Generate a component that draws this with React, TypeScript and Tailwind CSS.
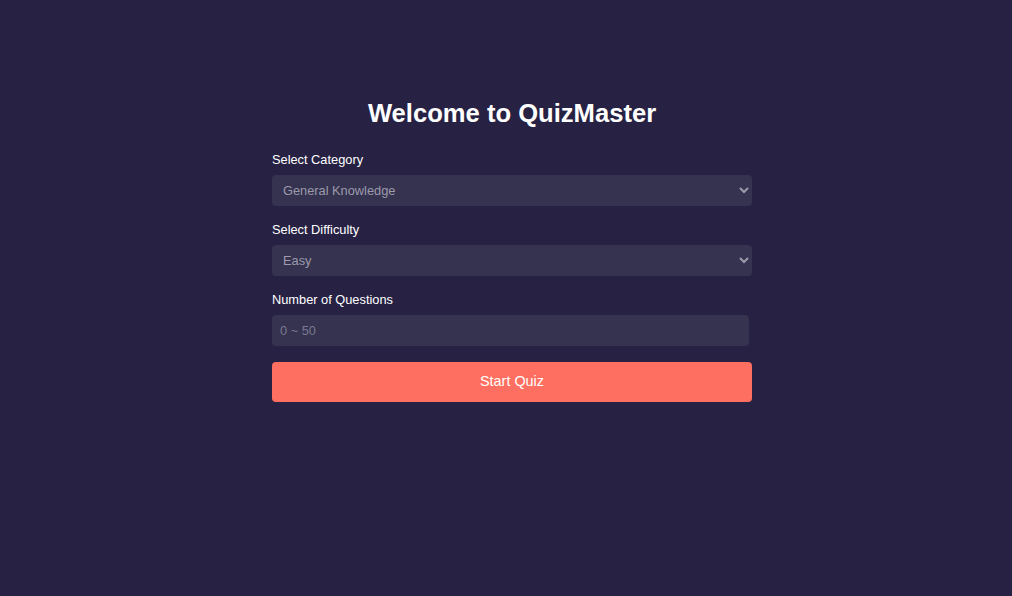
export default function App() {
  return (
    <div
      className="min-h-screen w-full bg-[#272244] pt-[98px] pl-3"
      style={{ fontFamily: '"Liberation Sans", Arial, sans-serif' }}
    >
      <div className="mx-auto w-[480px]">
        <h1 className="mb-[24px] text-center text-[25.6px] leading-[30px] font-bold text-white">
          Welcome to QuizMaster
        </h1>
        <form className="flex flex-col">
          <label className="mb-2 block text-[12.8px] leading-[15px] text-white">Select Category</label>
          <select className="mb-4 h-[31px] w-full rounded bg-[#35334f] px-[7px] text-[12.8px] text-[#9c9aab] outline-none">
            <option>General Knowledge</option>
            <option>Science</option>
            <option>History</option>
          </select>
          <label className="mb-2 block text-[12.8px] leading-[15px] text-white">Select Difficulty</label>
          <select className="mb-4 h-[31px] w-full rounded bg-[#35334f] px-[7px] text-[12.8px] text-[#9c9aab] outline-none">
            <option>Easy</option>
            <option>Medium</option>
            <option>Hard</option>
          </select>
          <label className="mb-2 block text-[12.8px] leading-[15px] text-white">Number of Questions</label>
          <input
            type="number"
            placeholder="0 ~ 50"
            className="mb-4 h-[31px] w-[477px] rounded bg-[#35334f] px-2 text-[12.8px] text-[#9c9aab] outline-none placeholder:text-[#7a7890]"
          />
          <button
            type="button"
            className="h-10 w-full rounded bg-[#ff6f61] text-[14.4px] text-white"
          >
            Start Quiz
          </button>
        </form>
      </div>
    </div>
  );
}
